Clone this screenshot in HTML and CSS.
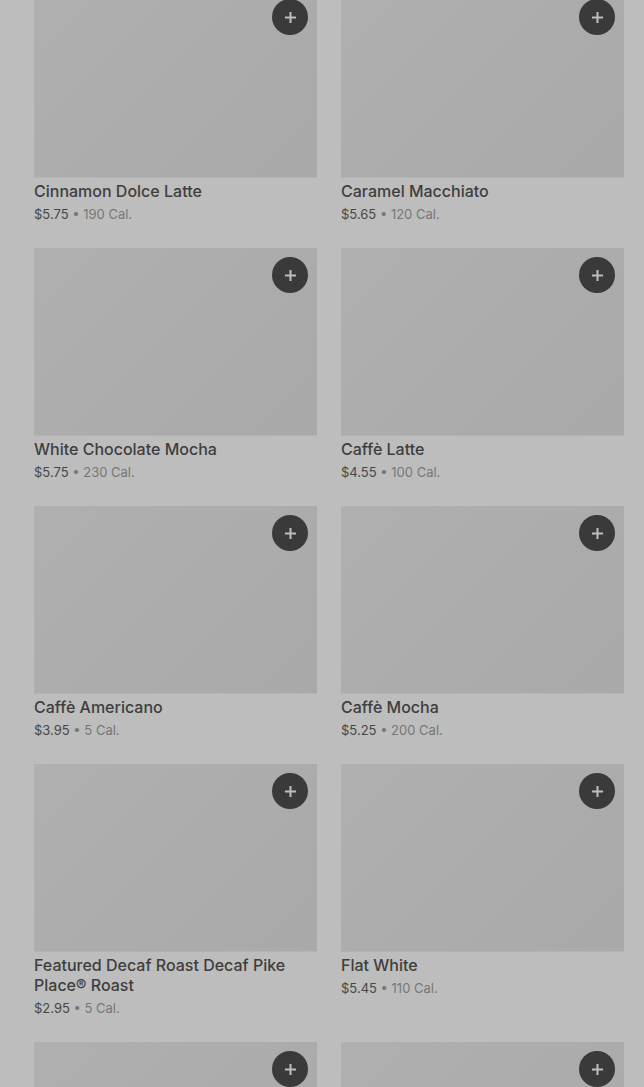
FILE: index.html
```html
<!DOCTYPE html>
<html lang="en">
<head>
    <meta charset="UTF-8">
    <meta name="viewport" content="width=device-width, initial-scale=1.0">
    <title>Menu</title>
    <link rel="stylesheet" href="styles.css">
</head>
<body>
    <div class="menu">
        <div class="item">
            <div class="photo"><button class="add"><svg viewBox="0 0 14 14"><path d="M7 1v12M1 7h12"/></svg></button></div>
            <div class="name">Cinnamon Dolce Latte</div>
            <div class="meta"><span class="price">$5.75</span> • 190 Cal.</div>
        </div>
        <div class="item">
            <div class="photo"><button class="add"><svg viewBox="0 0 14 14"><path d="M7 1v12M1 7h12"/></svg></button></div>
            <div class="name">Caramel Macchiato</div>
            <div class="meta"><span class="price">$5.65</span> • 120 Cal.</div>
        </div>
        <div class="item">
            <div class="photo"><button class="add"><svg viewBox="0 0 14 14"><path d="M7 1v12M1 7h12"/></svg></button></div>
            <div class="name">White Chocolate Mocha</div>
            <div class="meta"><span class="price">$5.75</span> • 230 Cal.</div>
        </div>
        <div class="item">
            <div class="photo"><button class="add"><svg viewBox="0 0 14 14"><path d="M7 1v12M1 7h12"/></svg></button></div>
            <div class="name">Caffè Latte</div>
            <div class="meta"><span class="price">$4.55</span> • 100 Cal.</div>
        </div>
        <div class="item">
            <div class="photo"><button class="add"><svg viewBox="0 0 14 14"><path d="M7 1v12M1 7h12"/></svg></button></div>
            <div class="name">Caffè Americano</div>
            <div class="meta"><span class="price">$3.95</span> • 5 Cal.</div>
        </div>
        <div class="item">
            <div class="photo"><button class="add"><svg viewBox="0 0 14 14"><path d="M7 1v12M1 7h12"/></svg></button></div>
            <div class="name">Caffè Mocha</div>
            <div class="meta"><span class="price">$5.25</span> • 200 Cal.</div>
        </div>
        <div class="item">
            <div class="photo"><button class="add"><svg viewBox="0 0 14 14"><path d="M7 1v12M1 7h12"/></svg></button></div>
            <div class="name">Featured Decaf Roast Decaf Pike Place® Roast</div>
            <div class="meta"><span class="price">$2.95</span> • 5 Cal.</div>
        </div>
        <div class="item">
            <div class="photo"><button class="add"><svg viewBox="0 0 14 14"><path d="M7 1v12M1 7h12"/></svg></button></div>
            <div class="name">Flat White</div>
            <div class="meta"><span class="price">$5.45</span> • 110 Cal.</div>
        </div>
        <div class="item">
            <div class="photo"><button class="add"><svg viewBox="0 0 14 14"><path d="M7 1v12M1 7h12"/></svg></button></div>
        </div>
        <div class="item">
            <div class="photo"><button class="add"><svg viewBox="0 0 14 14"><path d="M7 1v12M1 7h12"/></svg></button></div>
        </div>
    </div>
</body>
</html>
```

FILE: styles.css
```css
html, body {
    margin: 0;
    background-color: #bdbdbd;
    overflow: hidden;
}
body {
    font-family: Inter, "Noto Sans", sans-serif;
    color: #3c3c3c;
}
.menu {
    display: grid;
    grid-template-columns: 283px 283px;
    column-gap: 24px;
    row-gap: 24px;
    padding: 0 20px 0 34px;
    margin-top: -10px;
}
.photo {
    height: 188px;
    background: linear-gradient(135deg, #b0b0b0 0%, #acacac 50%, #a9a9a9 100%);
    border-bottom: 1px solid #b3b3b3;
    box-sizing: border-box;
    display: flex;
    justify-content: flex-end;
    align-items: flex-start;
    padding: 9px;
}
.add {
    width: 36px;
    height: 36px;
    border-radius: 50%;
    border: none;
    background-color: #3a3a3a;
    display: flex;
    align-items: center;
    justify-content: center;
    padding: 0;
    cursor: pointer;
}
.add svg {
    width: 13px;
    height: 13px;
    stroke: #bdbdbd;
    stroke-width: 2.2;
    fill: none;
}
.name {
    margin-top: 3px;
    font-size: 16px;
    line-height: 20px;
    font-weight: 500;
    color: #3e3e3e;
}
.meta {
    margin-top: 3px;
    font-size: 13px;
    line-height: 20px;
    color: #777;
}
.price {
    color: #474747;
}
```
